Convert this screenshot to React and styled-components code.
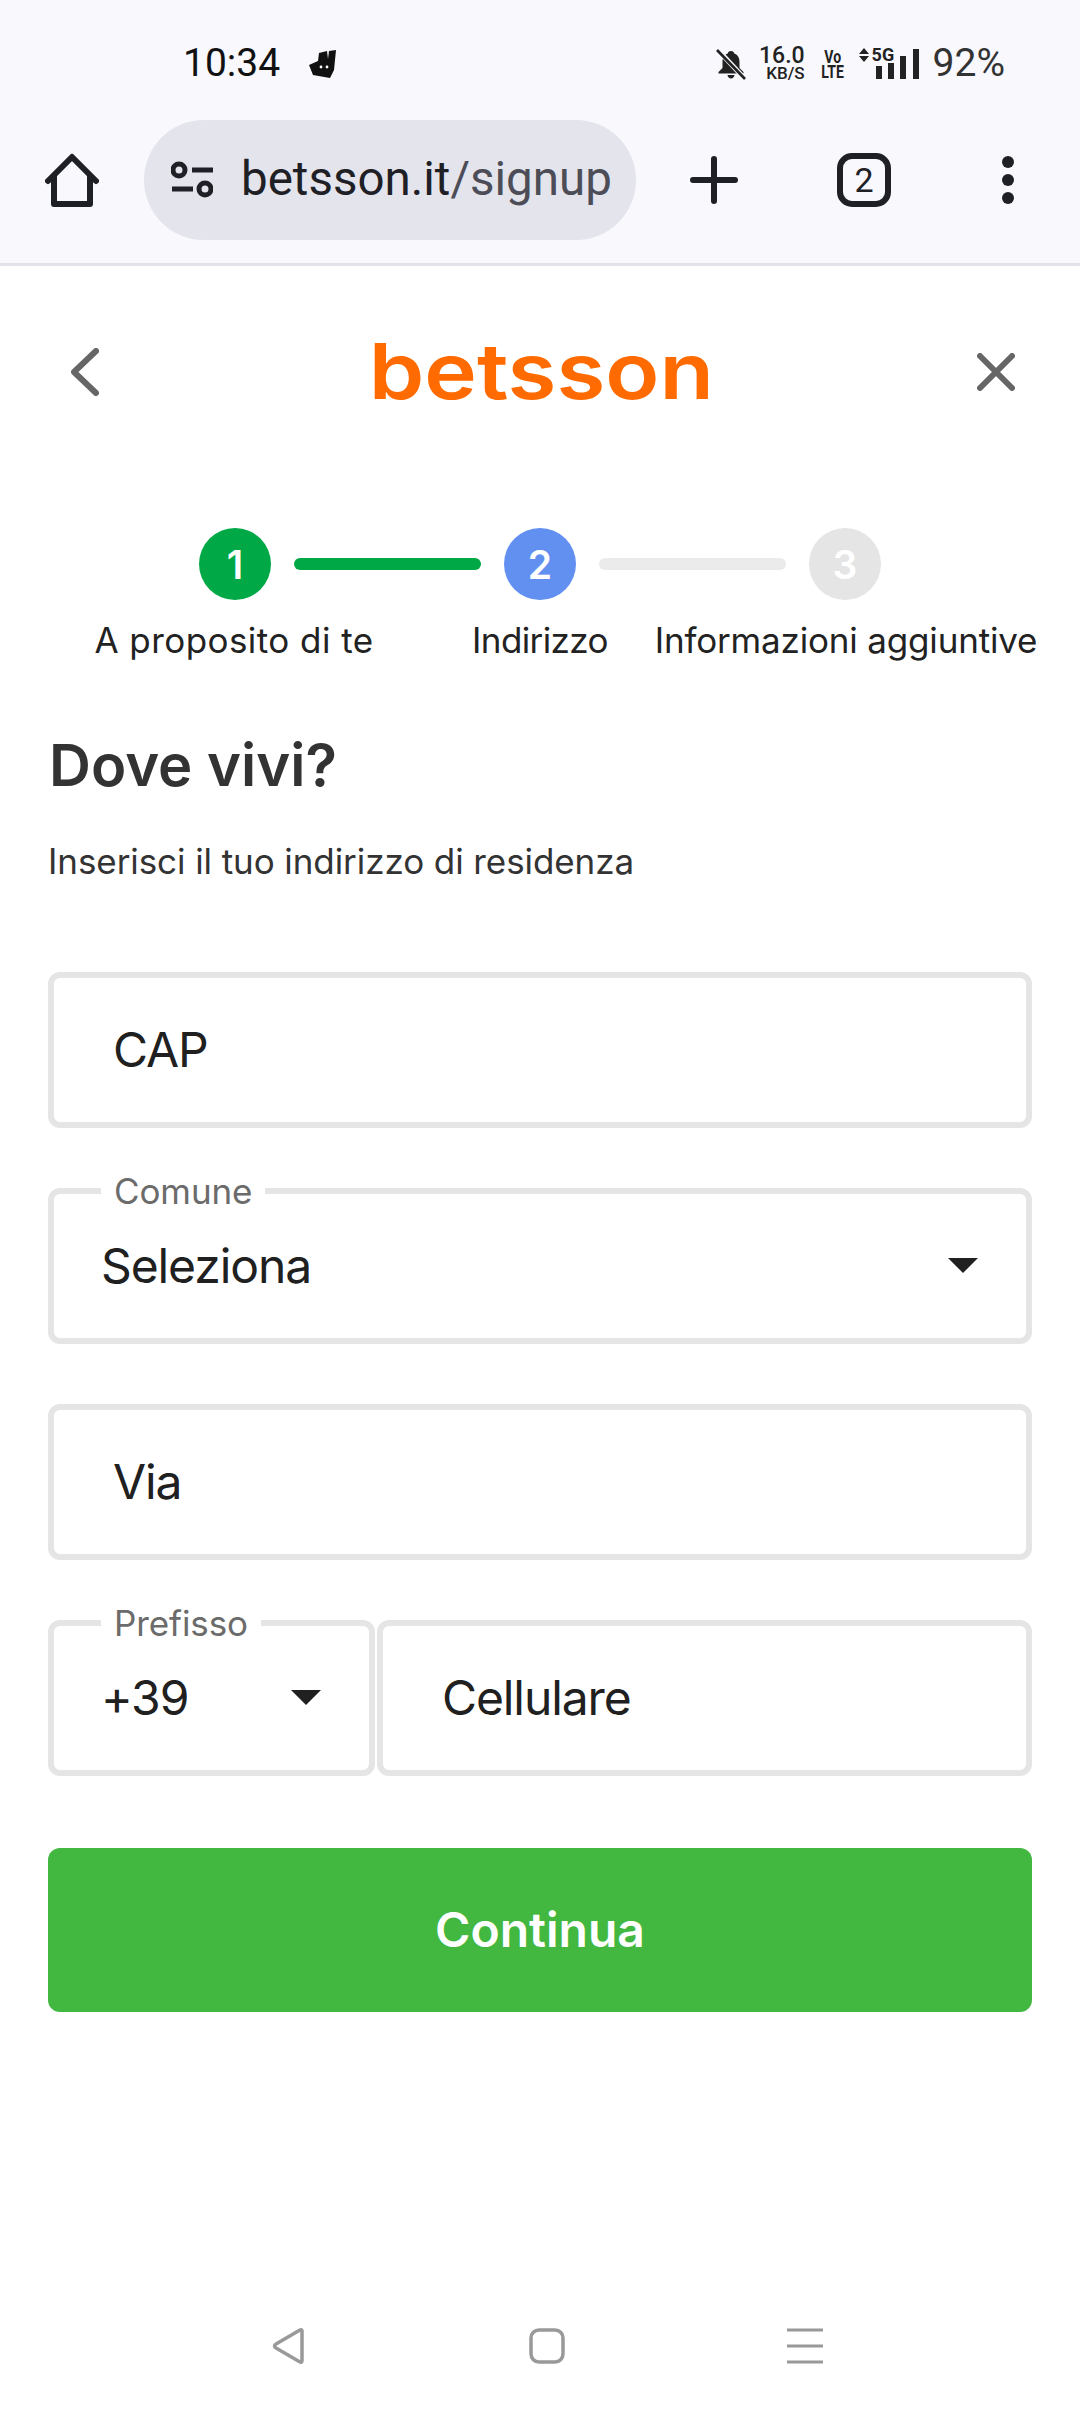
import React from "react";
import styled, { createGlobalStyle } from "styled-components";

const Global = createGlobalStyle`
  html, body { margin: 0; padding: 0; background: #fff; }
  * { box-sizing: border-box; }
`;

const Page = styled.div`
  width: 1080px;
  height: 2412px;
  display: flex;
  flex-direction: column;
  background: #fff;
  font-family: "Inter", "Liberation Sans", sans-serif;
  color: #202020;
  overflow: hidden;
`;

const Chrome = styled.header`
  flex: none;
  height: 266px;
  background: #f8f8fd;
  border-bottom: 3px solid #e3e3e9;
  font-family: "Roboto", "Liberation Sans", sans-serif;
`;

const StatusBar = styled.div`
  height: 120px;
  padding: 7px 75px 0 183px;
  display: flex;
  align-items: center;
  color: #111;
`;

const Time = styled.span`
  font-size: 39px;
  line-height: 1;
  margin-right: 29px;
`;

const StatusRight = styled.div`
  margin-left: auto;
  display: flex;
  align-items: center;
  color: #222;
`;

const Speed = styled.div`
  width: 46px;
  margin-left: 13px;
  display: flex;
  flex-direction: column;
  align-items: flex-end;
  font-weight: 500;
  white-space: nowrap;
`;

const SpeedValue = styled.span`
  font-size: 23px;
  line-height: 20px;
`;

const SpeedUnit = styled.span`
  font-size: 17px;
  line-height: 15px;
`;

const Volte = styled.div`
  width: 22px;
  margin-left: 17px;
  display: flex;
  flex-direction: column;
  align-items: center;
  font-size: 18px;
  line-height: 15px;
  font-weight: 700;
  white-space: nowrap;
`;

const VolteLine = styled.span`
  display: inline-block;
  transform: scaleX(0.78);
`;

const Signal = styled.div`
  position: relative;
  width: 60px;
  height: 32px;
  margin-left: 15px;
`;

const FiveG = styled.span`
  position: absolute;
  left: 13px;
  top: -2px;
  font-size: 18px;
  line-height: 17px;
  font-weight: 700;
  background: #f8f8fd;
`;

const Battery = styled.span`
  margin-left: 14px;
  font-size: 39px;
  line-height: 1;
  color: #333;
`;

const Toolbar = styled.div`
  height: 120px;
  padding-left: 45px;
  display: flex;
  align-items: center;
`;

const UrlPill = styled.div`
  width: 492px;
  height: 120px;
  margin-left: 45px;
  padding: 0 20px 0 27px;
  border-radius: 60px;
  background: #e3e4ec;
  display: flex;
  align-items: center;
  gap: 28px;
  overflow: hidden;
`;

const UrlText = styled.span`
  font-size: 47.500px;
  line-height: 1;
  color: #1f2026;
  white-space: nowrap;
`;

const UrlPath = styled.span`
  color: #4c4d57;
`;

const ToolSlot = styled.div`
  width: ${(p) => p.$w}px;
  display: flex;
  justify-content: center;
  align-items: center;
`;

const TabCount = styled.div`
  width: 54px;
  height: 54px;
  border: 6px solid #1f2026;
  border-radius: 15px;
  display: flex;
  align-items: center;
  justify-content: center;
  font-size: 34px;
  color: #1f2026;
`;

const Main = styled.main`
  flex: 1;
  display: flex;
  flex-direction: column;
`;

const TopBar = styled.div`
  flex: none;
  height: 212px;
  display: grid;
  grid-template-columns: 1fr auto 1fr;
  align-items: center;
  padding: 0 65px 0 71px;
`;

const Logo = styled.div`
  font-size: 77px;
  line-height: 1;
  font-weight: 600;
  color: #ff6b00;
  margin: -2px 0 0 -3px;
  transform: scaleX(1.155);
`;

const EndIcon = styled.div`
  display: flex;
  justify-content: ${(p) => p.$end ? "flex-end" : "flex-start"};
`;

const Stepper = styled.div`
  margin-top: 50px;
  display: flex;
  flex-direction: column;
  align-items: center;
`;

const StepTrack = styled.div`
  display: flex;
  align-items: center;
  gap: 23px;
`;

const StepDot = styled.div`
  width: 72px;
  height: 72px;
  border-radius: 50%;
  background: ${(p) => p.$color};
  color: #fff;
  font-weight: 600;
  font-size: 39px;
  display: flex;
  align-items: center;
  justify-content: center;
`;

const StepLine = styled.div`
  width: 187px;
  height: 12px;
  border-radius: 6px;
  background: ${(p) => p.$color};
`;

const StepLabels = styled.div`
  margin-top: 19px;
  display: grid;
  grid-template-columns: repeat(3, 306px);
`;

const StepLabel = styled.div`
  display: flex;
  justify-content: center;
  white-space: nowrap;
  font-size: 35px;
  line-height: 42px;
  letter-spacing: ${(p) => p.$spacing}px;
  color: #222;
`;

const Content = styled.section`
  padding: 0 48px;
`;

const Title = styled.h1`
  margin: 69px 0 0;
  font-size: 58px;
  line-height: 70px;
  font-weight: 600;
  color: #333;
  padding-left: 1px;
`;

const Subtitle = styled.p`
  margin: 40px 0 0;
  font-size: 35px;
  line-height: 42px;
  letter-spacing: -0.08px;
  color: #333;
`;

const Form = styled.div`
  margin-top: 90px;
  display: flex;
  flex-direction: column;
  gap: 60px;
`;

const Row = styled.div`
  display: flex;
  gap: 2px;
`;

const Field = styled.div`
  position: relative;
  flex: ${(p) => p.$grow ? "1" : "none"};
  width: ${(p) => p.$w ? `${p.$w}px` : "auto"};
  height: 156px;
  border: 6px solid #e5e5e5;
  border-radius: 12px;
  background: #fff;
  display: flex;
  align-items: center;
  justify-content: space-between;
  padding: 0 ${(p) => p.$select ? "48px" : "59px"} ${(p) => p.$select ? "0" : "2px"} ${(p) => p.$select ? "47px" : "59px"};
  font-size: 48px;
  letter-spacing: -1.1px;
  color: #202020;
`;

const FloatLabel = styled.span`
  position: absolute;
  left: 47px;
  top: -21px;
  padding: 0 13px;
  background: #fff;
  font-size: 35px;
  line-height: 36px;
  letter-spacing: -0.1px;
  color: #6b6b6b;
`;

const SelectValue = styled.span`
  margin-top: -2px;
`;

const Caret = styled.span`
  width: 0;
  height: 0;
  border-left: 15px solid transparent;
  border-right: 15px solid transparent;
  border-top: 15px solid #202020;
  margin-top: -2px;
`;

const Submit = styled.button`
  display: block;
  margin-top: 72px;
  width: 100%;
  height: 164px;
  border: 0;
  border-radius: 12px;
  background: #42b840;
  color: #fff;
  font-family: inherit;
  font-size: 48px;
  font-weight: 600;
  padding-bottom: 2px;
`;

const NavBar = styled.nav`
  margin-top: auto;
  padding: 0 0 48px 14px;
  display: flex;
  justify-content: center;
  gap: 222px;
`;

const HomeIcon = () => (
  <svg width="54" height="54" viewBox="0 0 54 54" fill="none" stroke="#1f2026" strokeWidth="6" strokeLinecap="round" strokeLinejoin="round">
    <path d="M3 28 27 4 51 28M9 23V51H45V23" />
  </svg>
);

const TuneIcon = () => (
  <svg width="42" height="38" viewBox="0 0 42 38" fill="none" stroke="#1f2026" strokeWidth="5">
    <circle cx="8" cy="9" r="6" />
    <path d="M21 9H42M1 28H22" />
    <circle cx="34" cy="28" r="6" />
  </svg>
);

const PlusIcon = () => (
  <svg width="48" height="48" viewBox="0 0 48 48" fill="none" stroke="#1f2026" strokeWidth="6" strokeLinecap="round">
    <path d="M24 3V45M3 24H45" />
  </svg>
);

const DotsIcon = () => (
  <svg width="12" height="48" viewBox="0 0 12 48" fill="#1f2026">
    <circle cx="6" cy="6" r="6" />
    <circle cx="6" cy="24" r="6" />
    <circle cx="6" cy="42" r="6" />
  </svg>
);

const MutedBell = () => (
  <svg width="30" height="32" viewBox="0 0 30 32">
    <path fill="#222" d="M15 3c-2 0-3 1-3.200 2.500C8 6.800 6.500 10 6.500 14v6L2.500 24v1.500h25V24l-4-4v-6c0-4-1.500-7.200-5.300-8.500C18 4 17 3 15 3zM11.500 27c.3 2 1.700 3.500 3.500 3.500s3.200-1.500 3.500-3.500z" />
    <path stroke="#f8f8fd" strokeWidth="5" d="M1 1l28 30" />
    <path stroke="#222" strokeWidth="2.600" d="M1 2l28 29" />
  </svg>
);

const Roo = () => (
  <svg width="27" height="28" viewBox="0 0 27 28">
    <path fill="#111" d="M10 3 18 1 19 9 20 1 27 0 25 20 21 28 4 25 0 15 9 11z" />
    <circle cx="12" cy="17" r="1.400" fill="#fff" />
    <circle cx="18" cy="17" r="1.400" fill="#fff" />
  </svg>
);

const SignalIcon = () => (
  <svg width="60" height="32" viewBox="0 0 60 32" fill="#222">
    <path d="M5 0 10 6H0zM5 14 0 8H10z" />
    <rect x="17" y="18" width="6" height="13" />
    <rect x="29" y="15" width="6" height="16" />
    <rect x="41" y="8" width="6" height="23" />
    <rect x="54" y="1" width="6" height="30" />
  </svg>
);

const BackIcon = () => (
  <svg width="28" height="48" viewBox="0 0 28 48" fill="none" stroke="#666" strokeWidth="6" strokeLinecap="round" strokeLinejoin="round">
    <path d="M25 3 3 24 25 45" />
  </svg>
);

const CloseIcon = () => (
  <svg width="38" height="38" viewBox="0 0 38 38" fill="none" stroke="#666" strokeWidth="6" strokeLinecap="round">
    <path d="M3 3 35 35M35 3 3 35" />
  </svg>
);

const NavBack = () => (
  <svg width="36" height="36" viewBox="0 0 36 36" fill="none" stroke="#999" strokeWidth="3.500" strokeLinejoin="round">
    <path d="M32 2 8 16c-2 1-2 3 0 4l24 14c1 .5 2 0 2-1V3c0-1-1-1.500-2-1z" transform="translate(-3 0)" />
  </svg>
);

const NavHome = () => (
  <svg width="36" height="36" viewBox="0 0 36 36" fill="none" stroke="#999" strokeWidth="3.500">
    <rect x="2" y="2" width="32" height="32" rx="8" />
  </svg>
);

const NavMenu = () => (
  <svg width="36" height="36" viewBox="0 0 36 36" fill="none" stroke="#999" strokeWidth="3">
    <path d="M0 2H36M0 18H36M0 34H36" />
  </svg>
);

export default function App() {
  return (
    <Page>
      <Global />
      <Chrome>
        <StatusBar>
          <Time>10:34</Time>
          <Roo />
          <StatusRight>
            <MutedBell />
            <Speed>
              <SpeedValue>16.0</SpeedValue>
              <SpeedUnit>KB/S</SpeedUnit>
            </Speed>
            <Volte>
              <VolteLine>Vo</VolteLine>
              <VolteLine>LTE</VolteLine>
            </Volte>
            <Signal>
              <SignalIcon />
              <FiveG>5G</FiveG>
            </Signal>
            <Battery>92%</Battery>
          </StatusRight>
        </StatusBar>
        <Toolbar>
          <HomeIcon />
          <UrlPill>
            <TuneIcon />
            <UrlText>
              betsson.it<UrlPath>/signup</UrlPath>
            </UrlText>
          </UrlPill>
          <ToolSlot $w={156}><PlusIcon /></ToolSlot>
          <ToolSlot $w={144}><TabCount>2</TabCount></ToolSlot>
          <ToolSlot $w={144}><DotsIcon /></ToolSlot>
        </Toolbar>
      </Chrome>
      <Main>
        <TopBar>
          <EndIcon><BackIcon /></EndIcon>
          <Logo>betsson</Logo>
          <EndIcon $end><CloseIcon /></EndIcon>
        </TopBar>
        <Stepper>
          <StepTrack>
            <StepDot $color="#00a846">1</StepDot>
            <StepLine $color="#00a846" />
            <StepDot $color="#6290f0">2</StepDot>
            <StepLine $color="#ebebeb" />
            <StepDot $color="#e5e5e5">3</StepDot>
          </StepTrack>
          <StepLabels>
            <StepLabel $spacing={0.45}>A proposito di te</StepLabel>
            <StepLabel $spacing={-0.6}>Indirizzo</StepLabel>
            <StepLabel $spacing={-0.17}>Informazioni aggiuntive</StepLabel>
          </StepLabels>
        </Stepper>
        <Content>
          <Title>Dove vivi?</Title>
          <Subtitle>Inserisci il tuo indirizzo di residenza</Subtitle>
          <Form>
            <Field>CAP</Field>
            <Field $select>
              <FloatLabel>Comune</FloatLabel>
              <SelectValue>Seleziona</SelectValue>
              <Caret />
            </Field>
            <Field>Via</Field>
            <Row>
              <Field $select $w={327}>
                <FloatLabel>Prefisso</FloatLabel>
                <SelectValue>+39</SelectValue>
                <Caret />
              </Field>
              <Field $grow>Cellulare</Field>
            </Row>
          </Form>
          <Submit>Continua</Submit>
        </Content>
        <NavBar>
          <NavBack />
          <NavHome />
          <NavMenu />
        </NavBar>
      </Main>
    </Page>
  );
}
